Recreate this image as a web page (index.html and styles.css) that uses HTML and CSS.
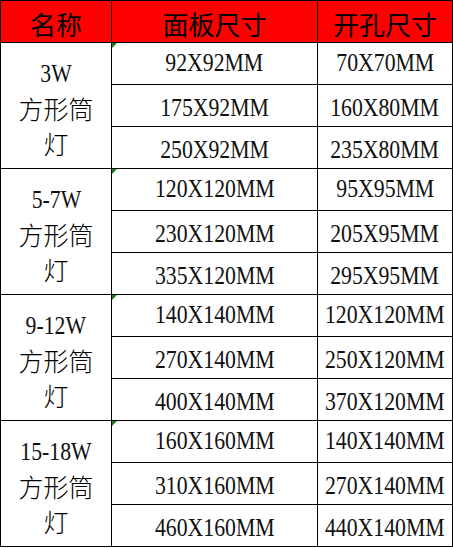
FILE: index.html
```html
<!DOCTYPE html>
<html lang="zh-CN">
<head>
<meta charset="utf-8">
<title>方形筒灯尺寸表</title>
<link rel="stylesheet" href="styles.css">
</head>
<body>
<div class="sheet">
  <div class="cell head">名称</div>
  <div class="cell head">面板尺寸</div>
  <div class="cell head">开孔尺寸</div>

  <div class="cell name"><span class="num">3W</span><span class="cjk">方形筒</span><span class="cjk">灯</span></div>
  <div class="cell first"><span class="num">92X92MM</span></div>
  <div class="cell top"><span class="num">70X70MM</span></div>
  <div class="cell low"><span class="num">175X92MM</span></div>
  <div class="cell low"><span class="num">160X80MM</span></div>
  <div class="cell low"><span class="num">250X92MM</span></div>
  <div class="cell low"><span class="num">235X80MM</span></div>

  <div class="cell name"><span class="num">5-7W</span><span class="cjk">方形筒</span><span class="cjk">灯</span></div>
  <div class="cell first"><span class="num">120X120MM</span></div>
  <div class="cell top"><span class="num">95X95MM</span></div>
  <div class="cell low"><span class="num">230X120MM</span></div>
  <div class="cell low"><span class="num">205X95MM</span></div>
  <div class="cell low"><span class="num">335X120MM</span></div>
  <div class="cell low"><span class="num">295X95MM</span></div>

  <div class="cell name"><span class="num">9-12W</span><span class="cjk">方形筒</span><span class="cjk">灯</span></div>
  <div class="cell first"><span class="num">140X140MM</span></div>
  <div class="cell top"><span class="num">120X120MM</span></div>
  <div class="cell low"><span class="num">270X140MM</span></div>
  <div class="cell low"><span class="num">250X120MM</span></div>
  <div class="cell low"><span class="num">400X140MM</span></div>
  <div class="cell low"><span class="num">370X120MM</span></div>

  <div class="cell name"><span class="num">15-18W</span><span class="cjk">方形筒</span><span class="cjk">灯</span></div>
  <div class="cell first"><span class="num">160X160MM</span></div>
  <div class="cell top"><span class="num">140X140MM</span></div>
  <div class="cell low"><span class="num">310X160MM</span></div>
  <div class="cell low"><span class="num">270X140MM</span></div>
  <div class="cell low"><span class="num">460X160MM</span></div>
  <div class="cell low"><span class="num">440X140MM</span></div>
</div>
</body>
</html>
```

FILE: styles.css
```css
html, body {
  margin: 0;
  padding: 0;
  background: #ffffff;
}

.sheet {
  width: 453px;
  box-sizing: border-box;
  display: grid;
  grid-template-columns: 110px 205px 134px;
  grid-auto-rows: 41px;
  gap: 1px;
  padding: 1px;
  background: #000000;
}

.cell {
  position: relative;
  background: #ffffff;
  display: flex;
  align-items: center;
  justify-content: center;
  color: #000000;
  overflow: hidden;
  box-sizing: border-box;
}

.head {
  background: #ff0000;
  font-family: "Noto Sans CJK SC", sans-serif;
  font-size: 26px;
  font-weight: 400;
  padding-top: 3px;
}

.num {
  display: inline-block;
  font-family: "Liberation Serif", serif;
  font-size: 25px;
  line-height: 34px;
  transform: scaleX(0.87);
  white-space: nowrap;
  color: #111111;
}

.first,
.top {
  padding-bottom: 2px;
}

.low {
  padding-top: 4px;
}

.first::before {
  content: "";
  position: absolute;
  left: 0;
  top: 0;
  border-top: 5px solid #1b7d1b;
  border-right: 5px solid transparent;
}

.name {
  grid-row: span 3;
  flex-direction: column;
  padding-top: 6px;
}

.cjk {
  font-family: "Noto Sans CJK SC", sans-serif;
  font-size: 25px;
  font-weight: 300;
  line-height: 34.5px;
}

.name .num {
  line-height: 34.5px;
}
```
